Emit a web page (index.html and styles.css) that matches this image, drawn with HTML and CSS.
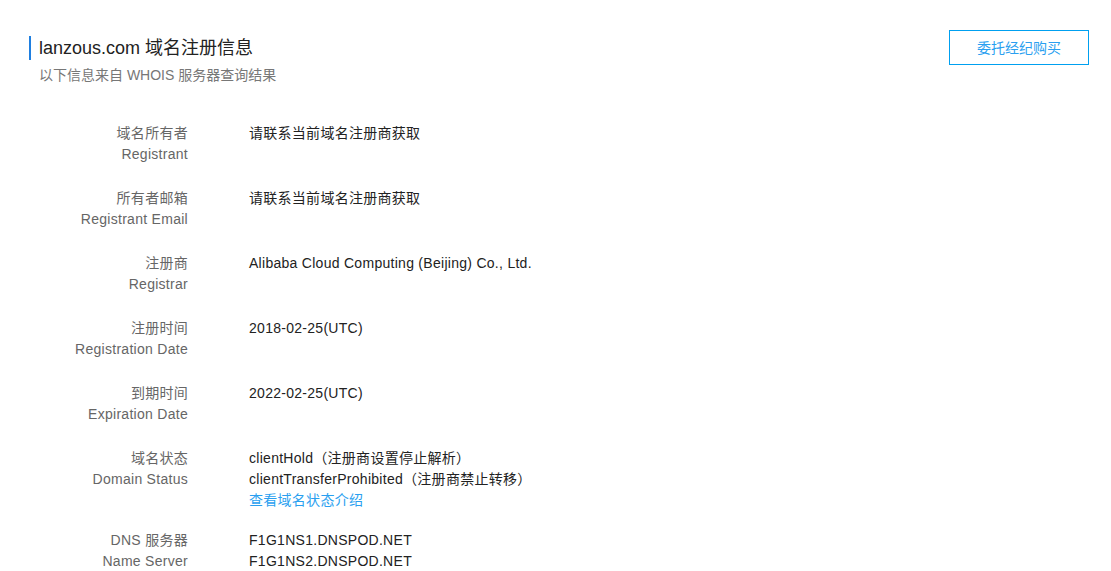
FILE: index.html
```html
<!DOCTYPE html>
<html lang="zh-CN">
<head>
<meta charset="utf-8">
<title>lanzous.com 域名注册信息</title>
<link rel="stylesheet" href="styles.css">
</head>
<body>
<div class="page">
  <header class="header">
    <div class="heading">
      <h1 class="title">lanzous.com 域名注册信息</h1>
      <p class="subtitle">以下信息来自 WHOIS 服务器查询结果</p>
    </div>
    <a class="btn" href="#">委托经纪购买</a>
  </header>
  <dl class="info">
    <div class="row">
      <dt class="label"><span>域名所有者</span><span>Registrant</span></dt>
      <dd class="value"><span>请联系当前域名注册商获取</span></dd>
    </div>
    <div class="row">
      <dt class="label"><span>所有者邮箱</span><span>Registrant Email</span></dt>
      <dd class="value"><span>请联系当前域名注册商获取</span></dd>
    </div>
    <div class="row">
      <dt class="label"><span>注册商</span><span>Registrar</span></dt>
      <dd class="value"><span>Alibaba Cloud Computing (Beijing) Co., Ltd.</span></dd>
    </div>
    <div class="row">
      <dt class="label"><span>注册时间</span><span>Registration Date</span></dt>
      <dd class="value"><span>2018-02-25(UTC)</span></dd>
    </div>
    <div class="row">
      <dt class="label"><span>到期时间</span><span>Expiration Date</span></dt>
      <dd class="value"><span>2022-02-25(UTC)</span></dd>
    </div>
    <div class="row">
      <dt class="label"><span>域名状态</span><span>Domain Status</span></dt>
      <dd class="value">
        <span>clientHold（注册商设置停止解析）</span>
        <span>clientTransferProhibited（注册商禁止转移）</span>
        <a class="link" href="#">查看域名状态介绍</a>
      </dd>
    </div>
    <div class="row">
      <dt class="label"><span>DNS 服务器</span><span>Name Server</span></dt>
      <dd class="value"><span>F1G1NS1.DNSPOD.NET</span><span>F1G1NS2.DNSPOD.NET</span></dd>
    </div>
  </dl>
</div>
</body>
</html>
```
FILE: styles.css
```css
* { box-sizing: border-box; }
html, body { margin: 0; padding: 0; background: #fff; }
body {
  font-family: "Liberation Sans", "Noto Sans CJK SC", sans-serif;
  font-size: 14px;
  color: #333;
}
.page {
  padding: 30px 22px 0 29px;
}
.header {
  display: flex;
  justify-content: space-between;
  align-items: flex-start;
}
.title {
  margin: 6px 0 0;
  padding-left: 8px;
  border-left: 2px solid #1f7fe0;
  font-size: 18px;
  font-weight: normal;
  line-height: 24px;
  color: #222;
}
.subtitle {
  margin: 5px 0 0 10px;
  font-size: 14px;
  line-height: 21px;
  color: #777;
}
.btn {
  display: flex;
  align-items: center;
  justify-content: center;
  width: 140px;
  height: 35px;
  padding-bottom: 1px;
  border: 1px solid #00a0f0;
  color: #2a9ff0;
  text-decoration: none;
  font-size: 14px;
}
.info {
  margin: 37px 0 0;
}
.row {
  display: grid;
  grid-template-columns: 159px 1fr;
  column-gap: 61px;
  min-height: 65px;
  padding-bottom: 19px;
  line-height: 21px;
  letter-spacing: 0.28px;
}
.label {
  display: flex;
  flex-direction: column;
  align-items: flex-end;
  color: #666;
  margin: 0;
}
.value {
  display: flex;
  flex-direction: column;
  align-items: flex-start;
  margin: 0;
  color: #222;
}
.link {
  color: #2a9ff0;
  text-decoration: none;
}
```
